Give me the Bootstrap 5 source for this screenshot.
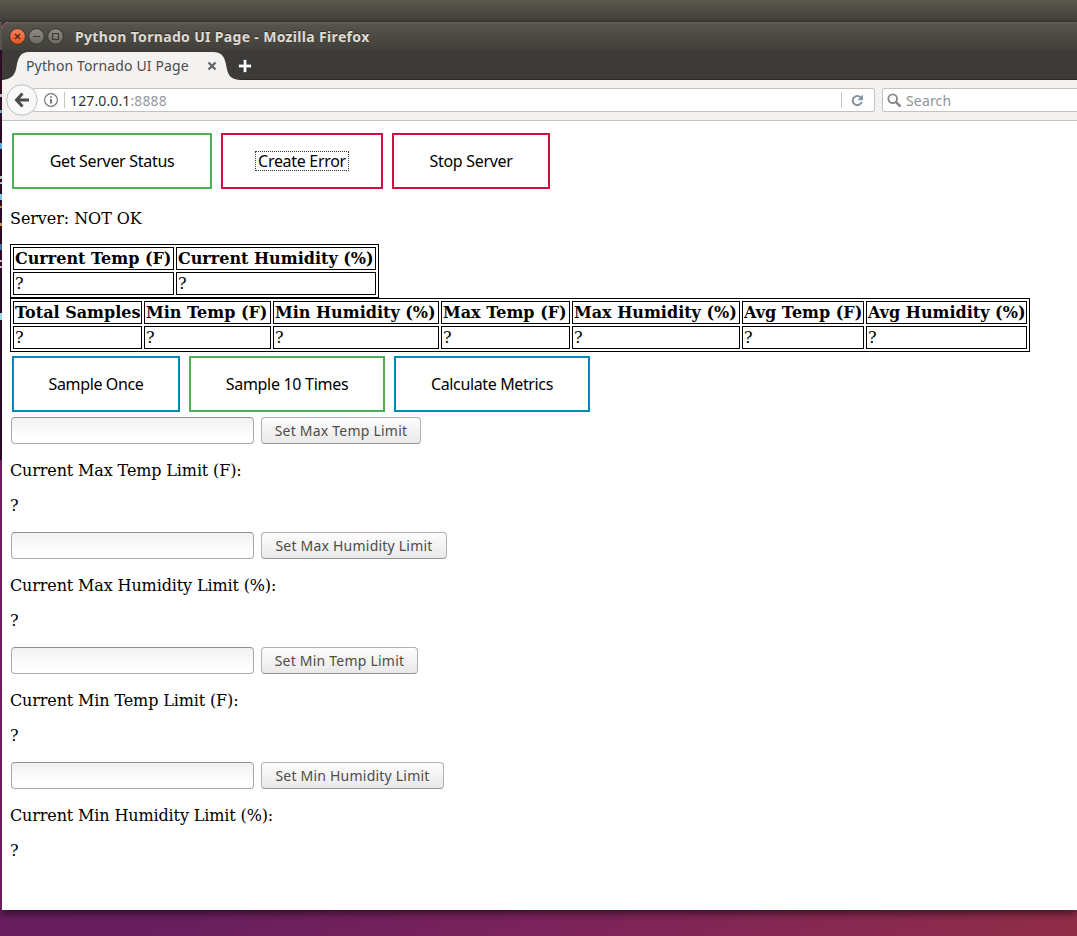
<!DOCTYPE html>
<html lang="en">
<head>
<meta charset="utf-8">
<title>Python Tornado UI Page</title>
<link href="https://cdn.jsdelivr.net/npm/bootstrap@5.3.0/dist/css/bootstrap.min.css" rel="stylesheet">
<style>
body{height:936px;overflow:hidden;background:linear-gradient(90deg,#671d5e 0,#691f5d 200px,#7d235b 560px,#912d48 1077px);font-family:"Noto Sans","Open Sans",sans-serif;}
.sysbar{height:22px;background:linear-gradient(#5b574e,#43423c 90%,#3b3a35)}
.edge-strip{width:2px;background:linear-gradient(#57544d 0,#57544d 28px,#300a24 28px,#2c0922 438px,#6b1f60 438px,#671d5e 100%)}
.edge-strip i{position:absolute;left:0;width:2px;height:3px}
.win{height:888px;border-top-left-radius:7px;background:#fff;box-shadow:0 3px 9px rgba(0,0,0,.6);overflow:hidden}
.titlebar{height:29px;background:linear-gradient(#625e55 0,#56534b 3px,#403f3a 100%);color:#dfdbd2;font-size:14px;font-weight:700;padding-left:7px}
.wtitle{margin-left:11px;letter-spacing:.33px;text-shadow:0 -1px #2b2a27;white-space:nowrap}
.tabs-strip{height:29px;background:#3c3b37;border-bottom:1px solid #2d2c29}
.tab-item{width:238px;height:29px}
.tab-item>svg{position:absolute;left:0;top:0}
.tab-text{left:24px;top:5px;font-size:14px;line-height:20px;color:#4c4c4c;letter-spacing:.14px;white-space:nowrap}
.navrow{height:41px;background:#f3f2f1;border-bottom:1px solid #c9c1bd}
.url-box{width:842px;height:24px;margin-left:31px;background:#fff;border:1px solid #c5c1bf;border-radius:0 2px 2px 0;font-size:14px;color:#333}
.url-box .gray{color:#999}
.url-text{letter-spacing:.12px}
.back{left:4px;top:4px;z-index:2}
.vline{width:1px;height:16px;background:#c8c5c3}
.search-box{width:210px;height:24px;margin-left:7px;background:#fff;border:1px solid #c5c1bf;border-radius:2px 0 0 2px;color:#949494;font-size:14px;letter-spacing:.15px}
.pagebody{padding:12px 0 0 8px;font-family:"DejaVu Serif",serif;font-size:16px;line-height:19px;color:#000}
.pagebody p{margin:0;letter-spacing:-.07px}
.pagebody .limit p{letter-spacing:-.13px}
.abtn{height:56px;border:2px solid #4caf50;border-radius:0;background:#fff;color:#000;padding:0;font:16px "Noto Sans",sans-serif;letter-spacing:-.3px;white-space:nowrap}
.abtn.red{border-color:#d0103f}
.abtn.blue{border-color:#008cba;letter-spacing:-.37px}
.focus-dots{border:1px dotted #333;padding:0 2px;line-height:18px;display:inline-block}
.grid-table{border:1px solid #000;border-collapse:separate;border-spacing:2px;table-layout:fixed;line-height:19px;white-space:nowrap}
.grid-table th,.grid-table td{border:1px solid #000;padding:1px;height:23px}
.limit-input{width:243px;height:27px;border:1px solid #aaa;border-top-color:#8f8f8f;border-radius:4px;background:linear-gradient(#f1f1f1,#fff 80%);padding:0 6px;margin-left:1px}
.limit-btn{height:27px;border:1px solid #b3b0ad;border-bottom-color:#989592;border-radius:4px;background:linear-gradient(#fdfdfd,#eae9e8);color:#4c4c4c;font:14px "Noto Sans",sans-serif;letter-spacing:.22px;padding:0;margin-left:7px;white-space:nowrap}
.limit{height:115px}
</style>
</head>
<body>
<div class="sysbar"></div>
<div class="d-flex">
  <div class="edge-strip position-relative flex-shrink-0">
    <i style="top:72px;background:#bbb"></i><i style="top:88px;background:#58a9d8"></i><i style="top:121px;height:6px;background:#58a9d8"></i><i style="top:154px;background:#bbb"></i><i style="top:160px;height:2px;background:#bbb"></i><i style="top:172px;height:6px;background:#7cc4e8"></i><i style="top:184px;height:2px;background:#b98442"></i><i style="top:201px;background:#c99446"></i><i style="top:222px;height:6px;background:#416fa1"></i><i style="top:238px;height:2px;background:#bbb"></i><i style="top:244px;height:2px;background:#bbb"></i><i style="top:291px;height:7px;background:#9bd7e4"></i>
  </div>
  <main class="win flex-grow-1">
    <div class="titlebar d-flex align-items-center">
      <svg width="55" height="18" viewBox="0 0 55 18" fill="none">
        <defs><linearGradient id="red" x2="0" y2="1"><stop stop-color="#f7845c"/><stop offset="1" stop-color="#e4501e"/></linearGradient><linearGradient id="gry" x2="0" y2="1"><stop stop-color="#918e83"/><stop offset="1" stop-color="#686760"/></linearGradient></defs>
        <circle cx="8.5" cy="8.500" r="7.9" fill="url(#red)" stroke="#34332f"/><path d="M6 6l5 5M11 6l-5 5" stroke="#472317" stroke-width="1.2"/>
        <circle cx="27.5" cy="8.500" r="7.8" fill="url(#gry)" stroke="#34332f"/><path d="M24 8.500h7" stroke="#3b3a36" stroke-width="1.2"/>
        <circle cx="46.5" cy="8.500" r="7.8" fill="url(#gry)" stroke="#34332f"/><path d="M43.5 5.500h6v6h-6z" stroke="#3b3a36" stroke-width="1.2"/>
      </svg>
      <span class="wtitle">Python Tornado UI Page - Mozilla Firefox</span>
    </div>
    <div class="tabs-strip d-flex">
      <div class="tab-item position-relative">
        <svg width="238" height="29" viewBox="0 0 238 29"><path d="M0 29C10 28 13 24 14.500 16C16 6 19 1 27 1H211C220 1 223 6 224.500 16C226 24 228 28 238 29Z" fill="#f3f2f1"/></svg>
        <span class="tab-text position-absolute">Python Tornado UI Page</span>
        <svg style="left:205px;top:10px" width="10" height="10" viewBox="0 0 10 10"><path d="M1.500 1.500l7 7M8.500 1.500l-7 7" stroke="#666" stroke-width="2.300"/></svg>
      </div>
      <svg width="14" height="29" viewBox="0 0 14 29" style="margin-left:-2px"><path d="M7 8.500v13M.5 15h13" stroke="#5b6368" stroke-width="4"/><path d="M7 9v12M1 15h12" stroke="#fff" stroke-width="2.400"/></svg>
    </div>
    <div class="navrow d-flex align-items-center position-relative">
      <svg class="back position-absolute" width="32" height="32" viewBox="0 0 32 32" fill="none"><circle cx="16" cy="16" r="15.300" fill="#f9f8f8" stroke="#c2bfbc"/><path d="M16.500 9.500L10.500 16l6 6.500M11 16h12" stroke="#4c4c4c" stroke-width="3"/></svg>
      <div class="url-box d-flex align-items-center flex-shrink-0">
        <svg style="margin-left:9px" width="16" height="16" viewBox="0 0 16 16" fill="none"><circle cx="8" cy="8" r="6.400" stroke="#777" stroke-width="1.200"/><path d="M8 7v4.500M8 4.200v1.600" stroke="#666" stroke-width="1.700"/></svg>
        <div class="vline" style="margin-left:5px"></div>
        <span style="margin-left:5px" class="url-text">127.0.0.1<span class="gray">:8888</span></span>
        <div class="vline ms-auto"></div>
        <svg style="margin:0 10px 0 9px" width="13" height="13" viewBox="0 0 13 13" fill="none"><path d="M9.500 3.200A4.600 4.600 0 1 0 10.700 8" stroke="#8595a2" stroke-width="2.100"/><path d="M12 .5v5.700H6.500z" fill="#8595a2"/></svg>
      </div>
      <div class="search-box d-flex align-items-center flex-shrink-0">
        <svg style="margin-left:4px" width="15" height="15" viewBox="0 0 15 15" fill="none" stroke="#888"><circle cx="5.700" cy="5.700" r="4.300" stroke-width="1.900"/><path d="M8.800 8.800L13.500 13.500" stroke-width="2.500"/></svg>
        <span style="margin-left:4px">Search</span>
      </div>
    </div>
    <div class="pagebody">
      <div class="d-flex" style="gap:9px;padding-left:2px">
        <button class="abtn" style="width:200px">Get Server Status</button>
        <button class="abtn red" style="width:162px"><span class="focus-dots">Create Error</span></button>
        <button class="abtn red" style="width:158px">Stop Server</button>
      </div>
      <p style="padding:20px 0 16px">Server: NOT OK</p>
      <table class="grid-table" style="width:369px">
        <colgroup><col style="width:161px"><col style="width:200px"></colgroup>
        <tr><th>Current Temp (F)</th><th>Current Humidity (%)</th></tr>
        <tr><td>?</td><td>?</td></tr>
      </table>
      <table class="grid-table" style="width:1020px">
        <colgroup><col style="width:129px"><col style="width:127px"><col style="width:166px"><col style="width:129px"><col style="width:168px"><col style="width:122px"><col style="width:161px"></colgroup>
        <tr><th>Total Samples</th><th>Min Temp (F)</th><th>Min Humidity (%)</th><th>Max Temp (F)</th><th>Max Humidity (%)</th><th>Avg Temp (F)</th><th>Avg Humidity (%)</th></tr>
        <tr><td>?</td><td>?</td><td>?</td><td>?</td><td>?</td><td>?</td><td>?</td></tr>
      </table>
      <div class="d-flex" style="gap:9px;padding:4px 0 5px 2px">
        <button class="abtn blue" style="width:168px">Sample Once</button>
        <button class="abtn" style="width:196px">Sample 10 Times</button>
        <button class="abtn blue" style="width:196px">Calculate Metrics</button>
      </div>
      <section class="limit">
        <div class="d-flex"><input class="limit-input" aria-label="Max temp"><button class="limit-btn" style="width:160px">Set Max Temp Limit</button></div>
        <p style="padding:17px 0 16px">Current Max Temp Limit (F):</p><p>?</p>
      </section>
      <section class="limit">
        <div class="d-flex"><input class="limit-input" aria-label="Max humidity"><button class="limit-btn" style="width:186px">Set Max Humidity Limit</button></div>
        <p style="padding:17px 0 16px">Current Max Humidity Limit (%):</p><p>?</p>
      </section>
      <section class="limit">
        <div class="d-flex"><input class="limit-input" aria-label="Min temp"><button class="limit-btn" style="width:157px">Set Min Temp Limit</button></div>
        <p style="padding:17px 0 16px">Current Min Temp Limit (F):</p><p>?</p>
      </section>
      <section class="limit">
        <div class="d-flex"><input class="limit-input" aria-label="Min humidity"><button class="limit-btn" style="width:183px">Set Min Humidity Limit</button></div>
        <p style="padding:17px 0 16px">Current Min Humidity Limit (%):</p><p>?</p>
      </section>
    </div>
  </main>
</div>
<script src="https://cdn.jsdelivr.net/npm/bootstrap@5.3.0/dist/js/bootstrap.bundle.min.js"></script>
</body>
</html>
